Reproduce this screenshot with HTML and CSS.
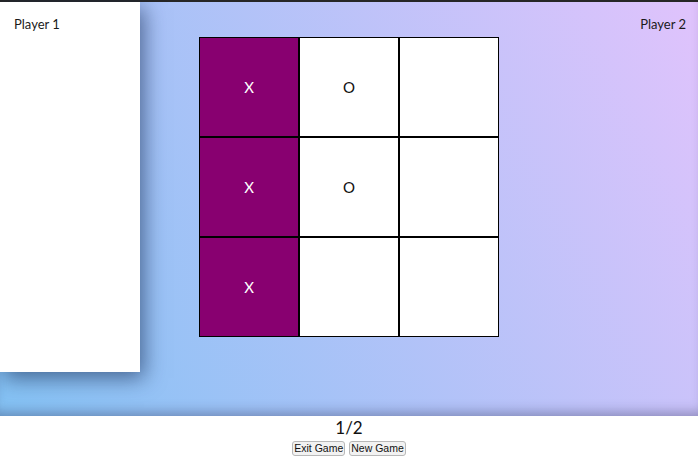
FILE: index.html
```html
<!DOCTYPE html>
<html>
<head>
<meta charset="utf-8">
<link rel="stylesheet" href="styles.css">
</head>
<body>
<div class="game">
  <aside class="panel"><span class="player">Player 1</span></aside>
  <div class="board">
    <div class="cell x">X</div>
    <div class="cell">O</div>
    <div class="cell"></div>
    <div class="cell x">X</div>
    <div class="cell">O</div>
    <div class="cell"></div>
    <div class="cell x">X</div>
    <div class="cell"></div>
    <div class="cell"></div>
  </div>
  <div class="right"><span class="player">Player 2</span></div>
</div>
<footer class="footer">
  <div class="score">1/2</div>
  <div class="buttons">
    <button class="btn">Exit Game</button>
    <button class="btn">New Game</button>
  </div>
</footer>
</body>
</html>
```
FILE: styles.css
```css
html, body {
  margin: 0;
  padding: 0;
  background: #ffffff;
}
body {
  width: 698px;
  height: 456px;
  overflow: hidden;
  font-family: "Lato", "Noto Sans", sans-serif;
  color: #1a1a1a;
}
.game {
  height: 414px;
  border-top: 2px solid #262626;
  background: linear-gradient(62deg, #84c2f4 0%, #e0c3fc 100%);
  box-shadow: inset 0 -10px 12px -6px rgba(40, 40, 80, 0.35);
  display: grid;
  grid-template-columns: 1fr auto 1fr;
  align-items: start;
}
.panel {
  width: 140px;
  height: 370px;
  background: #fff;
  box-shadow: 4px 6px 20px rgba(20, 40, 80, 0.6);
  box-sizing: border-box;
  padding: 14px 0 0 14px;
}
.player {
  font-size: 13px;
  display: block;
  line-height: 16px;
}
.right {
  display: flex;
  justify-content: flex-end;
  padding: 14px 12px 0 0;
}
.board {
  margin-top: 35px;
  display: grid;
  grid-template-columns: repeat(3, 100px);
  grid-template-rows: repeat(3, 100px);
}
.cell {
  box-sizing: border-box;
  border: 1px solid #000;
  background: #fff;
  display: flex;
  align-items: center;
  justify-content: center;
  font-size: 15px;
  color: #111;
}
.cell.x {
  background: #880070;
  color: #fff;
}
.footer {
  height: 40px;
  display: flex;
  flex-direction: column;
  align-items: center;
}
.score {
  font-size: 17px;
  line-height: 20px;
  margin-top: 2px;
  color: #111;
}
.buttons {
  display: flex;
  gap: 4px;
  margin-top: 3px;
}
.btn {
  font-family: "Liberation Sans", Arial, sans-serif;
  font-size: 10.5px;
  padding: 0 1px;
  height: 15px;
  line-height: 13px;
  border: 1px solid #b8b8b8;
  border-radius: 3px;
  background: #f2f2f2;
  color: #111;
}
```
